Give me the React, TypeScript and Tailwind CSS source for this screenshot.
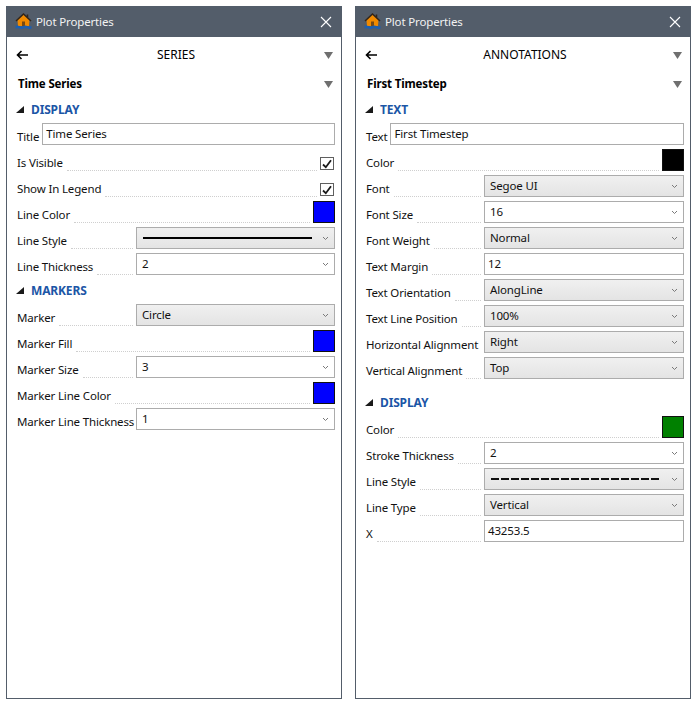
import React, { createContext, useContext } from "react";

const LabelWidth = createContext("w-[119px]");

const HouseIcon = () => (
  <svg width="17" height="17" viewBox="0 0 17 17" className="shrink-0">
    <path d="M2.5 7 L8.5 1.5 L14.5 7 L14 13 L3 13 Z" fill="#f08a00" />
    <path d="M1 8 L8.5 1 L16 8 M12.5 1.5 V4.5" fill="none" stroke="#33261a" strokeWidth="1.5" />
    <rect x="7" y="8.5" width="3" height="4.5" fill="#7a4a10" />
    <path d="M0.5 13 C3.5 11.5 5.5 14.5 8.5 13 C11.5 11.5 13.5 14.5 16.5 13 L16.5 15.5 C13.5 17 11.5 14.5 8.5 15.5 C5.5 17 3.5 14.5 0.5 15.5 Z" fill="#1c5fb0" />
  </svg>
);

const CloseIcon = () => (
  <svg width="12" height="12" viewBox="0 0 12 12" className="shrink-0">
    <path d="M1 1 L11 11 M11 1 L1 11" stroke="#fff" strokeWidth="1.1" />
  </svg>
);

const BackArrow = () => (
  <svg width="12" height="10" viewBox="0 0 12 10" className="shrink-0">
    <path d="M1.5 5 H12 M5.5 1 L1.5 5 L5.5 9" fill="none" stroke="#000" strokeWidth="1.6" />
  </svg>
);

const GrayTriangle = () => (
  <svg width="9" height="7" viewBox="0 0 9 7" className="shrink-0">
    <path d="M0 0 H9 L4.5 7 Z" fill="#6f6f6f" />
  </svg>
);

const Chevron = () => (
  <svg width="7" height="5" viewBox="0 0 7 5" className="shrink-0">
    <path d="M1 1 L3.5 3.5 L6 1" fill="none" stroke="#7a7a7a" strokeWidth="1" />
  </svg>
);

const Expander = () => (
  <svg width="8" height="8" viewBox="0 0 8 8" className="shrink-0">
    <path d="M8 0 V7 H0 Z" fill="#1a1a1a" />
  </svg>
);

const Heading = ({ text, mt }: { text: string; mt: string }) => (
  <div className={`flex h-[14px] items-center pl-[9px] ${mt}`}>
    <div className="mr-[7px] w-[8px]">
      <Expander />
    </div>
    <span className="text-[12px] font-bold text-[#1c56a6]">{text}</span>
  </div>
);

const Label = ({ text, dotted = true, free }: { text: string; dotted?: boolean; free?: boolean }) => {
  const w = useContext(LabelWidth);
  return (
    <div className={`flex min-w-0 items-end ${free ? "flex-1" : `${w} shrink-0`}`}>
      <span className="whitespace-nowrap leading-[16px] text-[#111]">{text}</span>
      {dotted && <div className="ml-[4px] mr-[3px] flex-1 border-b border-dotted border-[#cfcfcf]" />}
    </div>
  );
};

const Row = ({ children }: { children: React.ReactNode }) => (
  <div className="flex h-[22px] pl-[10px] pr-[6px]">{children}</div>
);

const Combo = ({ value, gray, line }: { value?: string; gray?: boolean; line?: "solid" | "dash" }) => (
  <div
    className={`flex min-w-0 flex-1 items-center border border-[#acacac] pl-[5px] pr-[5px] ${
      gray ? "bg-gradient-to-b from-[#f0f0f0] to-[#e4e4e4]" : "bg-white"
    }`}
  >
    <div className="min-w-0 flex-1 leading-[18px] text-[#111]">
      {line === "solid" && <div className="ml-[1px] mr-[10px] h-[2px] bg-black" />}
      {line === "dash" && (
        <svg width="169" height="2" className="ml-[1px] block">
          <line x1="0" y1="1" x2="169" y2="1" stroke="#111" strokeWidth="2" strokeDasharray="8 2" />
        </svg>
      )}
      {value && <span>{value}</span>}
    </div>
    <Chevron />
  </div>
);

const Input = ({ value, gap }: { value: string; gap?: boolean }) => (
  <div
    className={`flex min-w-0 flex-1 items-center border border-[#acacac] bg-white pl-[3px] leading-[18px] text-[#111] ${
      gap ? "ml-[3px]" : ""
    }`}
  >
    <span>{value}</span>
  </div>
);

const Swatch = ({ color }: { color: string }) => (
  <div className="h-[22px] w-[22px] shrink-0 border border-[#111]" style={{ backgroundColor: color }} />
);

const Check = () => (
  <div className="mr-[1px] mt-[8px] flex h-[13px] w-[14px] shrink-0 items-center justify-center border border-[#5f5f5f] bg-white">
    <svg width="10" height="10" viewBox="0 0 10 10">
      <path d="M1 5.5 L3.8 8.2 L9 1.2" fill="none" stroke="#1a1a1a" strokeWidth="1.8" />
    </svg>
  </div>
);

const Panel = ({ crumb, name, children }: { crumb: string; name: string; children: React.ReactNode }) => (
  <div className="flex h-[693px] w-[336px] shrink-0 flex-col border-x border-b border-[#535d6a] bg-white">
    <div className="flex h-[31px] shrink-0 items-center bg-[#535d6a] pl-[8px] pr-[9px] text-white">
      <HouseIcon />
      <span className="ml-[4px] flex-1 text-[#f2f2f2]">Plot Properties</span>
      <CloseIcon />
    </div>
    <div className="flex h-[36px] shrink-0 items-center pl-[9px] pr-[8px]">
      <BackArrow />
      <span className="flex-1 text-center text-[12px] tracking-[0px] text-black">{crumb}</span>
      <GrayTriangle />
    </div>
    <div className="flex h-[22px] shrink-0 items-center pl-[11px] pr-[8px]">
      <span className="flex-1 font-bold text-black">{name}</span>
      <GrayTriangle />
    </div>
    <div className="flex flex-col gap-[4px]">{children}</div>
  </div>
);

const Left = () => (
  <LabelWidth.Provider value="w-[119px]">
    <Panel crumb="SERIES" name="Time Series">
      <Heading text="DISPLAY" mt="mt-[8px] mb-[2px]" />
      <Row><div className="flex w-full"><div className="flex items-end"><span className="leading-[16px]">Title</span></div><Input value="Time Series" gap /></div></Row>
      <Row><Label free text="Is Visible" /><Check /></Row>
      <Row><Label free text="Show In Legend" /><Check /></Row>
      <Row><Label free text="Line Color" /><Swatch color="#0000ff" /></Row>
      <Row><Label text="Line Style" /><Combo gray line="solid" /></Row>
      <Row><Label text="Line Thickness" /><Combo value="2" /></Row>
      <Heading text="MARKERS" mt="mt-[5px] mb-[2px]" />
      <Row><Label text="Marker" /><Combo gray value="Circle" /></Row>
      <Row><Label free text="Marker Fill" /><Swatch color="#0000ff" /></Row>
      <Row><Label text="Marker Size" /><Combo value="3" /></Row>
      <Row><Label free text="Marker Line Color" /><Swatch color="#0000ff" /></Row>
      <Row><Label text="Marker Line Thickness" dotted={false} /><Combo value="1" /></Row>
    </Panel>
  </LabelWidth.Provider>
);

const Right = () => (
  <LabelWidth.Provider value="w-[118px]">
    <Panel crumb="ANNOTATIONS" name="First Timestep">
      <Heading text="TEXT" mt="mt-[8px] mb-[2px]" />
      <Row><div className="flex w-full"><div className="flex items-end"><span className="leading-[16px]">Text</span></div><Input value="First Timestep" gap /></div></Row>
      <Row><Label free text="Color" /><Swatch color="#000000" /></Row>
      <Row><Label text="Font" /><Combo gray value="Segoe UI" /></Row>
      <Row><Label text="Font Size" /><Combo value="16" /></Row>
      <Row><Label text="Font Weight" /><Combo gray value="Normal" /></Row>
      <Row><Label text="Text Margin" /><Input value="12" /></Row>
      <Row><Label text="Text Orientation" /><Combo gray value="AlongLine" /></Row>
      <Row><Label text="Text Line Position" /><Combo gray value="100%" /></Row>
      <Row><Label text="Horizontal Alignment" dotted={false} /><Combo gray value="Right" /></Row>
      <Row><Label text="Vertical Alignment" /><Combo gray value="Top" /></Row>
      <Heading text="DISPLAY" mt="mt-[13px] mb-[2px]" />
      <Row><Label free text="Color" /><Swatch color="#008000" /></Row>
      <Row><Label text="Stroke Thickness" /><Combo value="2" /></Row>
      <Row><Label text="Line Style" /><Combo gray line="dash" /></Row>
      <Row><Label text="Line Type" /><Combo gray value="Vertical" /></Row>
      <Row><Label text="X" /><Input value="43253.5" /></Row>
    </Panel>
  </LabelWidth.Provider>
);

export default function App() {
  return (
    <div className="flex h-[706px] w-[698px] gap-[13px] bg-white pl-[6px] pt-[6px] font-['Noto_Sans',sans-serif] text-[11.5px] tracking-[-0.15px] text-[#111]">
      <Left />
      <Right />
    </div>
  );
}
